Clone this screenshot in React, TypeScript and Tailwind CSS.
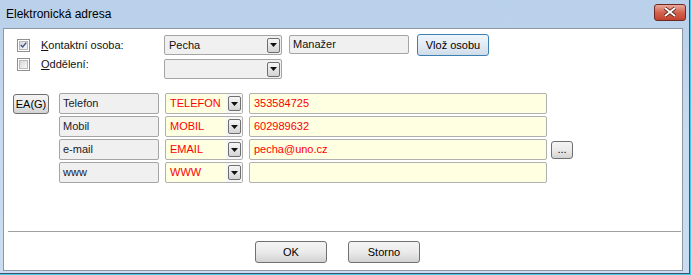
import React from 'react';

const font = { fontFamily: '"Liberation Sans", Arial, sans-serif' };

function Arrow() {
  return (
    <div className="w-[13px] h-[15px] rounded-[2px] border border-[#6f6f6f] bg-gradient-to-b from-[#f7f7f7] to-[#d4d4d4] flex items-center justify-center">
      <svg width="7" height="4" viewBox="0 0 7 4">
        <path d="M0 0H7L3.5 4Z" fill="#111" />
      </svg>
    </div>
  );
}

function Check({ checked }: { checked?: boolean }) {
  return (
    <div className="w-[13px] h-[13px] border border-[#8e8f8f] bg-white p-[1px] shrink-0">
      <div className="w-full h-full border border-[#b9b9b9] bg-gradient-to-br from-[#d6d6d6] to-[#f8f8f8] flex items-center justify-center">
        {checked && (
          <svg width="9" height="8" viewBox="0 0 9 8">
            <path d="M1 4L3.5 6.5L8 1" stroke="#3c4f8f" strokeWidth="1.8" fill="none" />
          </svg>
        )}
      </div>
    </div>
  );
}

function Btn({ label, className, blue }: { label: string; className: string; blue?: boolean }) {
  return (
    <div
      className={`${className} rounded-[3px] border flex items-center justify-center text-[11px] text-black ${
        blue
          ? 'border-[#3c7fb1] bg-gradient-to-b from-[#eef5fb] via-[#e3ecf5] to-[#cfdde9]'
          : 'border-[#707070] bg-gradient-to-b from-[#f4f4f4] via-[#ebebeb] to-[#d2d2d2]'
      }`}
    >
      {label}
    </div>
  );
}

const rows = [
  { name: 'Telefon', code: 'TELEFON', value: '353584725' },
  { name: 'Mobil', code: 'MOBIL', value: '602989632' },
  { name: 'e-mail', code: 'EMAIL', value: 'pecha@uno.cz', more: true },
  { name: 'www', code: 'WWW', value: '' },
];

export default function App() {
  return (
    <div className="w-[691px] h-[275px] bg-[#46c8e6] overflow-hidden" style={font}>
      <div className="w-[690px] h-[274px] border-r border-b border-[#3d5573] bg-gradient-to-b from-[#b9d0ea] via-[#c8dbf0] to-[#cbdcf0] flex flex-col">
        <div className="h-[28px] flex items-center justify-between pl-[6px] pr-[3px]">
          <span className="text-[12px] text-black">Elektronická adresa</span>
          <div className="w-[32px] h-[17px] -mt-[4px] rounded-[3px] border border-[#6b2a23] bg-gradient-to-b from-[#e9a99c] via-[#d3624f] to-[#c2432f] flex items-center justify-center">
            <svg width="12" height="10" viewBox="0 0 12 10">
              <path d="M1 1L11 9M11 1L1 9" stroke="#4a1a14" strokeWidth="3.4" />
              <path d="M1 1L11 9M11 1L1 9" stroke="#fff" strokeWidth="2" />
            </svg>
          </div>
        </div>
        <div className="ml-[3px] w-[680px] h-[243px] border border-[#8b97a6] bg-white flex flex-col text-[11px] text-[#111]">
          <div className="pt-[5px] flex items-center h-[27px]">
            <div className="ml-[13px]">
              <Check checked />
            </div>
            <div className="ml-[11px] w-[123px]">
              <span className="underline">K</span>ontaktní osoba:
            </div>
            <div className="w-[118px] h-[20px] border border-[#a5a5a5] rounded-[2px] bg-[#f0f0f0] flex items-center">
              <span className="pl-[4px] flex-1">Pecha</span>
              <div className="mr-[1px]">
                <Arrow />
              </div>
            </div>
            <div className="ml-[7px] w-[120px] h-[19px] -mt-[1px] border border-[#a5a5a5] rounded-[2px] bg-[#f0f0f0] flex items-center pl-[3px]">
              Manažer
            </div>
            <Btn label="Vlož osobu" className="ml-[8px] w-[72px] h-[22px]" blue />
          </div>
          <div className="mt-[1px] flex items-start">
            <div className="h-[14px] flex items-center">
              <div className="ml-[13px]">
                <Check />
              </div>
              <div className="ml-[11px] w-[123px]">
                <span className="underline">O</span>ddělení:
              </div>
            </div>
            <div className="mt-[2px] w-[118px] h-[20px] border border-[#a5a5a5] rounded-[2px] bg-[#f0f0f0] flex items-center justify-end">
              <div className="mr-[1px]">
                <Arrow />
              </div>
            </div>
          </div>
          <div className="mt-[14px] flex items-start">
            <Btn label="EA(G)" className="ml-[9px] mt-[1px] w-[36px] h-[20px]" />
            <div className="ml-[10px] flex flex-col gap-[2px]">
              {rows.map((r) => (
                <div key={r.name} className="h-[21px] flex items-center">
                  <div className="w-[100px] h-full border border-[#a5a5a5] rounded-[2px] bg-[#f0f0f0] flex items-center pl-[3px] text-[#1a1a2a]">
                    {r.name}
                  </div>
                  <div className="ml-[6px] w-[78px] h-full border border-[#b0b0b0] rounded-[2px] bg-[#ffffe1] flex items-center">
                    <span className="pl-[4px] flex-1 text-[#ff0000]">{r.code}</span>
                    <div className="h-full bg-[#f6f6f6] border-l border-white pl-[2px] pr-[1px] flex items-center">
                      <Arrow />
                    </div>
                  </div>
                  <div className="ml-[6px] w-[298px] h-full border border-[#b0b0b0] rounded-[2px] bg-[#ffffe1] flex items-center pl-[4px] text-[#ff0000]">
                    {r.value}
                  </div>
                  {r.more && <Btn label="..." className="ml-[4px] w-[22px] h-[18px] leading-none" />}
                </div>
              ))}
            </div>
          </div>
          <div className="mt-auto">
            <div className="ml-[4px] mr-[1px] h-[1px] bg-[#a0a0a0]" />
            <div className="pt-[9px] pb-[7px] flex ml-[251px] gap-[21px]">
              <Btn label="OK" className="w-[72px] h-[22px]" />
              <Btn label="Storno" className="w-[72px] h-[22px]" />
            </div>
          </div>
        </div>
      </div>
    </div>
  );
}
